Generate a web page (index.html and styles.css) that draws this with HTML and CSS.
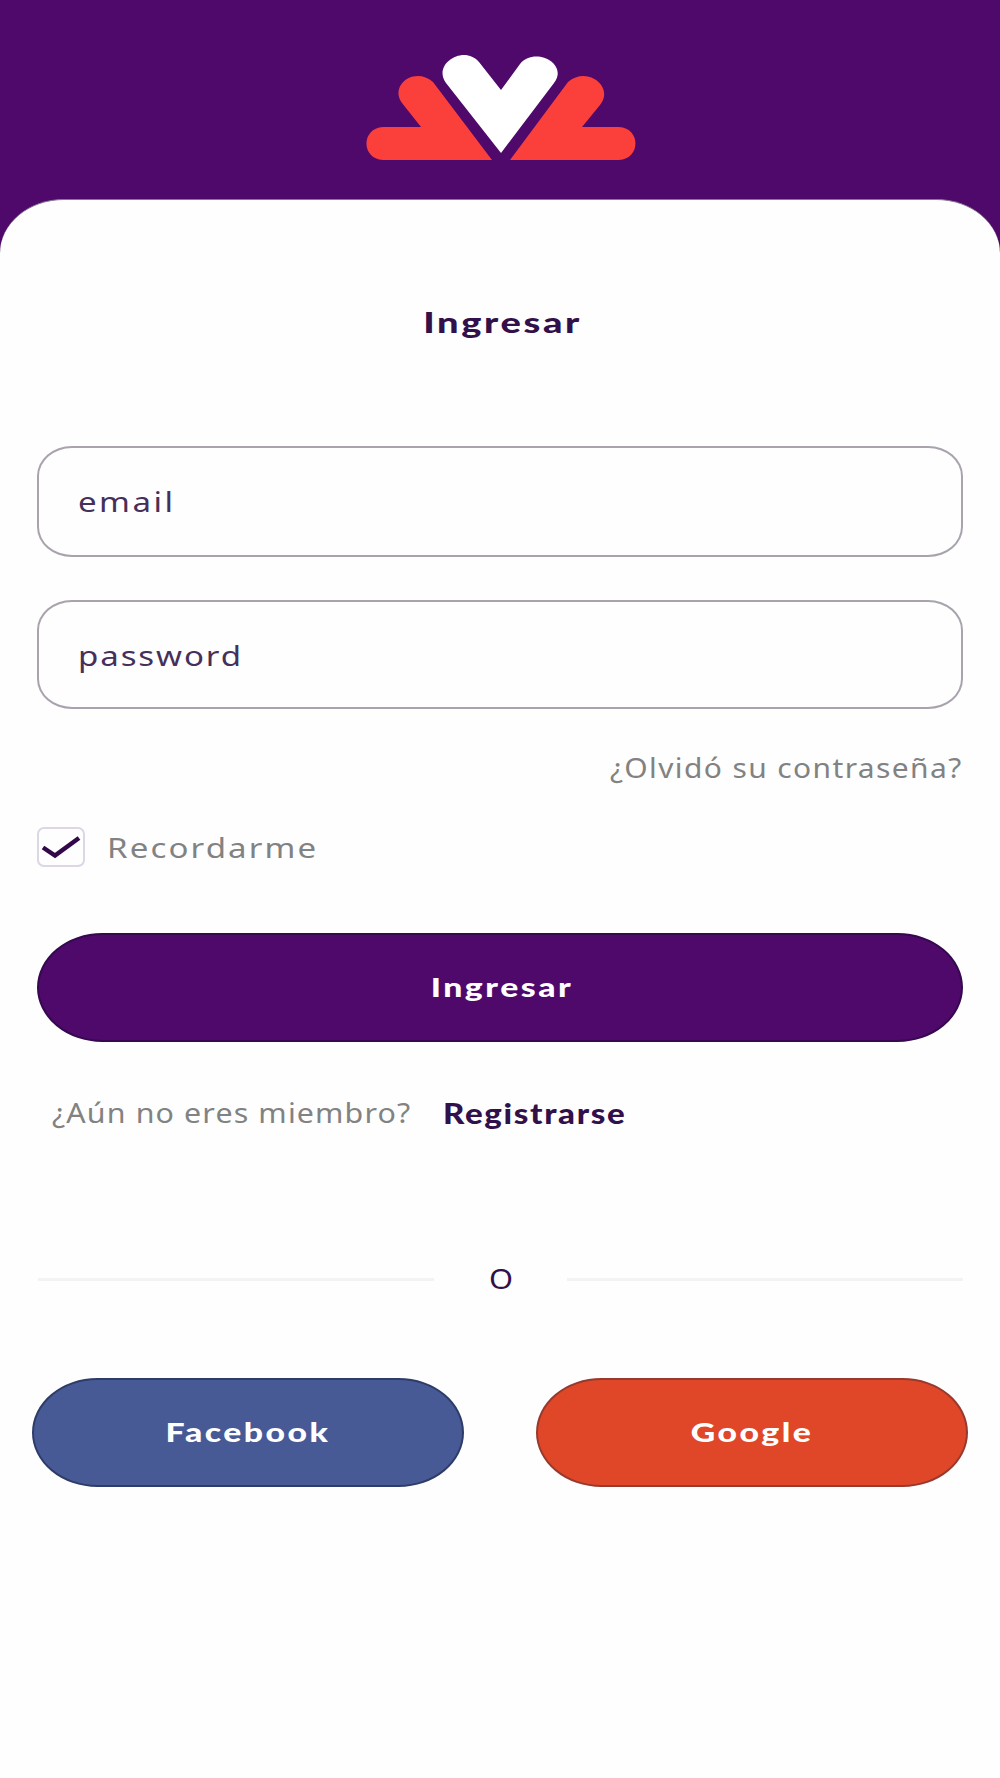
FILE: index.html
```
<!DOCTYPE html>
<html lang="es">
<head>
<meta charset="utf-8">
<meta name="viewport" content="width=device-width">
<title>Ingresar</title>
<link rel="stylesheet" href="styles.css">
</head>
<body>
<header class="hero">
  <svg class="logo" viewBox="365 53 270 106" role="img" aria-label="Logo">
    <g fill="#fb3f3b">
      <path d="M492 159H383C361 158 361 127 383 126H421L402 102C389 84 415 65 433 81Z"/>
      <path d="M510 159H619C641 158 641 127 619 126H582L600 104C615 86 587 64 568 81Z"/>
    </g>
    <path fill="#fff" d="M501 152L446 82C432 63 464 43 479 61L501 89L520 63C535 45 569 63 554 82Z"/>
  </svg>
</header>
<main class="panel">
  <h1 class="title"><span class="text">Ingresar</span></h1>
  <form class="form">
    <div class="field"><span class="text email">email</span></div>
    <div class="field"><span class="text password">password</span></div>
    <a class="forgot"><span class="text">¿Olvidó su contraseña?</span></a>
    <label class="remember">
      <span class="checkbox"><svg width="40" height="26" viewBox="0 0 40 26"><path d="M2 13.500L14 21.500L38 4" fill="none" stroke="#32084a" stroke-width="4.500"/></svg></span>
      <span class="text">Recordarme</span>
    </label>
    <button class="button submit" type="button"><span class="text">Ingresar</span></button>
  </form>
  <p class="signup"><span class="text ask">¿Aún no eres miembro?</span><a class="text register">Registrarse</a></p>
  <div class="divider"><span class="or">O</span></div>
  <div class="social">
    <button class="button facebook" type="button"><span class="text">Facebook</span></button>
    <button class="button google" type="button"><span class="text">Google</span></button>
  </div>
</main>
</body>
</html>
```
FILE: styles.css
```
* { box-sizing: border-box; }
body {
  margin: 0;
  min-height: 1778px;
  background: #fefefe;
  color: #32104a;
  font: 28px/40px "Noto Sans", "Open Sans", sans-serif;
}
.hero {
  display: flex;
  justify-content: center;
  height: 260px;
  padding-top: 54px;
  background: #4e096b;
}
.logo { width: 270px; height: 106px; overflow: visible; }
.panel {
  display: flow-root;
  margin-top: -61px;
  padding: 0 37px;
  border-top: 1px solid #88788f;
  border-radius: 64px 64px 0 0 / 54px 54px 0 0;
  background: #fefefe;
}
.text {
  display: inline-block;
  letter-spacing: 2px;
  white-space: nowrap;
  transform: scaleX(1.18);
  transform-origin: left;
}
.title {
  display: flex;
  justify-content: center;
  margin: 102px 0 0;
  padding-left: 6px;
  font: 900 29px/40px Lato, sans-serif;
}
.title .text, .button .text { transform-origin: center; }
.title .text { transform: scaleX(1.31); }
.form { display: flex; flex-direction: column; margin-top: 104px; }
.field {
  display: flex;
  align-items: center;
  height: 111px;
  padding: 0 0 1px 39px;
  border: 2px solid #aaa3ae;
  border-radius: 35px / 30px;
  color: #46305a;
}
.email { letter-spacing: 2.1px; }
.password { letter-spacing: 1.6px; }
.field + .field { height: 109px; margin-top: 43px; padding-bottom: 0; }
.forgot { align-self: flex-end; margin-top: 38px; color: #828282; }
.forgot .text { letter-spacing: 1.3px; transform: scaleX(1.07); transform-origin: right; }
.remember {
  display: flex;
  align-items: center;
  gap: 22px;
  height: 40px;
  margin-top: 40px;
  color: #828282;
}
.remember .text { letter-spacing: 1.8px; }
.checkbox {
  display: flex;
  align-items: center;
  justify-content: center;
  width: 48px;
  height: 40px;
  border: 2px solid #dcd6e5;
  border-radius: 7px;
}
.button {
  height: 109px;
  padding: 0 0 2px;
  border: 2px solid;
  border-radius: 66px / 55px;
  color: #fff;
  font: 900 27px/40px Lato, sans-serif;
}
.button .text { transform: scaleX(1.25); }
.submit { margin-top: 66px; padding-left: 4px; border-color: #35084f; background: #4e096b; }
.signup { display: flex; margin: 51px 0 0 15px; height: 40px; }
.ask { width: 391px; color: #828282; font-size: 27px; letter-spacing: 1px; transform: scaleX(1.125); }
.register { font: 900 28px/40px Lato, sans-serif; letter-spacing: 1.4px; }
.divider { display: flex; align-items: center; justify-content: space-between; margin: 126px 0 0 1px; height: 40px; }
.divider::before, .divider::after { content: ""; width: 396px; height: 3px; background: #f3f3f3; }
.or { padding-bottom: 2px; transform: scaleX(1.1); }
.social { display: flex; justify-content: space-between; margin: 79px -5px 0; }
.social .button { width: 432px; }
.facebook { border-color: #2d3c68; background: #475a95; }
.google { border-color: #98392d; background: #e04728; }
```
